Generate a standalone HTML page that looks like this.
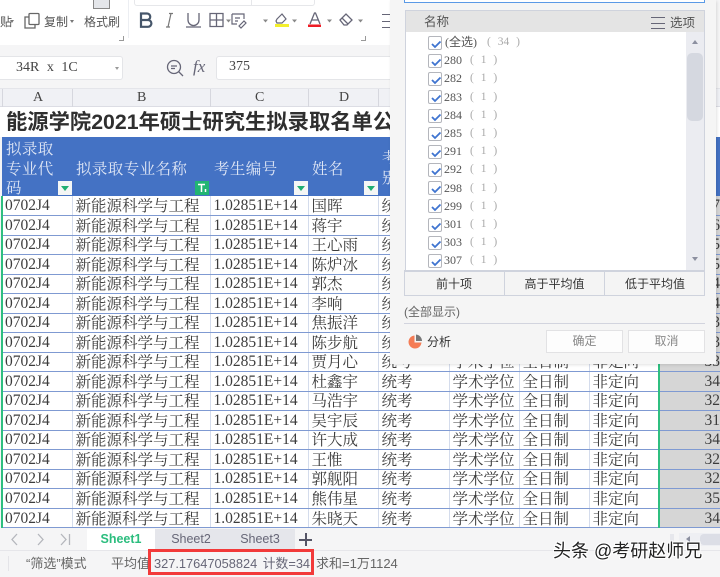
<!DOCTYPE html>
<html lang="zh"><head><meta charset="utf-8">
<style>
html,body{margin:0;padding:0;width:720px;height:577px;overflow:hidden;background:#f5f5f6}
*{box-sizing:border-box}
body{position:relative;font-family:"Liberation Sans","Noto Sans CJK SC",sans-serif;color:#444;filter:blur(.3px)}
.a{position:absolute;white-space:nowrap}
table{position:absolute;left:2px;top:196px;border-collapse:collapse;table-layout:fixed;width:718px;background:#fff}
td{height:19.53px;padding:0 0 0 3px;border-bottom:1px solid #7f9ad2;border-right:1px solid #d4dcec;font:15.5px/17px "Noto Serif CJK SC","Liberation Serif",serif;color:#3c3c3c;white-space:nowrap;overflow:hidden}
td.l{font:15.5px/17px "Liberation Serif",serif;padding-left:3px}
td.r{background:#d6d6d6;border-right:0;border-left:2px solid #2fbf80;text-align:right;font:15.5px/17px "Liberation Serif",serif;padding-right:0}
.h{top:158px;color:#dfe6f5;font:15.5px/20px "Noto Serif CJK SC",serif;letter-spacing:.4px}
.col{top:90px;font:14px/16px "Liberation Serif",serif;color:#444}
.fb{width:14px;height:14px;top:181px;background:#f4f6f5}
.fb:after{content:"";position:absolute;left:3px;top:5px;border:4px solid transparent;border-top:5px solid #1fae72;border-bottom:0}
.ck{position:absolute;left:428px;width:14px;height:14px;background:#fff;border:1px solid #b4b6bc;border-radius:2px}
.ck svg{position:absolute;left:1px;top:1px}
.it{left:444px;font:12px/16px "Liberation Serif",serif;color:#555}
.ct{font:11.5px/16px "Liberation Serif",serif;color:#aaa;white-space:pre;word-spacing:4px}
.btn{background:#fdfdfd;border:1px solid #e2e2e4;text-align:center;font-size:12px;line-height:21px;color:#888;height:23px;width:77px;top:330px}
.tb{color:#555;font-size:12px;line-height:16px}
</style></head><body>

<!-- ribbon -->
<div class="a" style="left:0;top:0;width:390px;height:45px;background:#fff"></div>
<div class="a" style="left:128px;top:0;width:1px;height:38px;background:#eceef2"></div>
<div class="a tb" style="left:0;top:14px">贴</div>
<div class="a" style="left:10px;top:20px;border:2.5px solid transparent;border-top:3px solid #777"></div>
<svg class="a" style="left:23px;top:12px" width="20" height="18" viewBox="0 0 20 18" fill="none" stroke="#666" stroke-width="1.3"><rect x="6" y="1.5" width="10" height="11" rx="1"/><path d="M6 5H2v11h10v-3.500"/></svg>
<div class="a tb" style="left:44px;top:14px">复制</div>
<div class="a" style="left:70px;top:20px;border:2.5px solid transparent;border-top:3px solid #777"></div>
<div class="a tb" style="left:84px;top:14px">格式刷</div>
<div class="a" style="left:93px;top:0;width:17px;height:9px;background:#e4e6ea;border:1px solid #888;border-top:0"></div>
<div class="a" style="left:134px;top:0;width:181px;height:6px;border:1px solid #e6e7ea;border-top:0;border-radius:0 0 3px 3px"></div>
<div class="a" style="left:251px;top:0;width:1px;height:6px;background:#e6e7ea"></div>
<div class="a" style="left:119px;top:36px;width:5px;height:5px;border-right:1px solid #999;border-bottom:1px solid #999"></div>
<div class="a" style="left:361px;top:36px;width:5px;height:5px;border-right:1px solid #999;border-bottom:1px solid #999"></div>
<svg class="a" style="left:138px;top:10px" width="232" height="20" viewBox="0 0 232 20" fill="none">
<path d="M3 3.500h6a3 3 0 0 1 0 6.500H3zM3 10h7a3.300 3.300 0 0 1 0 6.800H3z" stroke="#46566a" stroke-width="2.200"/>
<path d="M29 3.500h4M31 3.500l-3 13.500M26 17h4" stroke="#777" stroke-width="1.200" transform="translate(2 0)"/>
<path d="M50 3v7a5.500 5.500 0 0 0 11 0V3M48 17h15" stroke="#667" stroke-width="1.300"/>
<path d="M72 3.500h13v13H72zM78.500 3.500v13M72 10h13" stroke="#667" stroke-width="1.300"/>
<path d="M104 4h12v5M104 4v10h5M107 8h5M107 11h3M111 16l5-5 2 2-5 5z" stroke="#667" stroke-width="1.200" transform="translate(-10 0)"/>
<path d="M139 9l5-5 4 5-4 4h-5l-1-2z" stroke="#667" stroke-width="1.200"/>
<rect x="137" y="14" width="14" height="3" fill="#f3ef2c"/>
<path d="M172 14l4.500-11h1l4.500 11M174 10h6" stroke="#667" stroke-width="1.300"/>
<rect x="170" y="14.500" width="13" height="2.500" fill="#ee1c25"/>
<path d="M202 10l6-6 6 6-5 5h-3zM204 8l6 6" stroke="#667" stroke-width="1.300"/>
<path d="M88 9.500h5l-2.500 3zM125 9.500h5l-2.500 3zM154 9.500h5l-2.500 3zM189 9.500h5l-2.500 3zM220 9.500h5l-2.500 3z" fill="#888"/>
</svg>
<div class="a" style="left:382px;top:14px;width:8px;height:14px;border-top:1.300px solid #667;border-bottom:1.300px solid #667"></div>
<div class="a" style="left:382px;top:20.500px;width:8px;height:1.300px;background:#667"></div>

<!-- formula bar -->
<div class="a" style="left:0;top:56px;width:123px;height:24px;background:#fff;border:1px solid #e4e5e8;border-left:0;border-radius:0 3px 3px 0"></div>
<div class="a" style="left:16px;top:60px;font:14px/16px 'Liberation Serif',serif;color:#444;word-spacing:4px">34R x 1C</div>
<div class="a" style="left:115px;top:67px;border:2.500px solid transparent;border-top:3px solid #999"></div>
<svg class="a" style="left:166px;top:59px" width="18" height="18" viewBox="0 0 18 18" fill="none" stroke="#667" stroke-width="1.300"><circle cx="8" cy="8" r="6.500"/><path d="M12.500 12.500L17 17M5 7h6M5 9.500h4"/></svg>
<div class="a" style="left:193px;top:57px;font:italic 17px/20px 'Liberation Serif',serif;color:#667">fx</div>
<div class="a" style="left:216px;top:56px;width:180px;height:24px;background:#fff;border:1px solid #e4e5e8;border-radius:3px"></div>
<div class="a" style="left:229px;top:59px;font:14px/16px 'Liberation Serif',serif;color:#444">375</div>

<!-- column headers -->
<div class="a" style="left:0;top:88px;width:720px;height:19px;background:#f0f1f5;border-top:1px solid #e4e5ea;border-bottom:1px solid #dcdde4"></div>
<div class="a col" style="left:33px">A</div><div class="a col" style="left:137px">B</div><div class="a col" style="left:255px">C</div><div class="a col" style="left:339px">D</div>
<div class="a" style="left:2px;top:89px;width:1px;height:18px;background:#d6d7de"></div>
<div class="a" style="left:72px;top:89px;width:1px;height:18px;background:#d6d7de"></div>
<div class="a" style="left:210px;top:89px;width:1px;height:18px;background:#d6d7de"></div>
<div class="a" style="left:308px;top:89px;width:1px;height:18px;background:#d6d7de"></div>
<div class="a" style="left:378px;top:89px;width:1px;height:18px;background:#d6d7de"></div>

<!-- title -->
<div class="a" style="left:0;top:107px;width:720px;height:30px;background:#fff"></div>
<div class="a" style="left:6px;top:109px;font:bold 21.300px/27px 'Liberation Sans','Noto Sans CJK SC',sans-serif;color:#2f2f2f">能源学院2021年硕士研究生拟录取名单公示</div>

<!-- header -->
<div class="a" style="left:2px;top:137px;width:718px;height:59px;background:#4472c4"></div>
<div class="a h" style="left:6px;top:139px;line-height:19.500px;white-space:normal;width:60px">拟录取<br>专业代<br>码</div>
<div class="a h" style="left:76px">拟录取专业名称</div>
<div class="a h" style="left:214px">考生编号</div>
<div class="a h" style="left:312px">姓名</div>
<div class="a h" style="left:382px;top:147px;line-height:20px">考<br>别</div>
<div class="a fb" style="left:58px"></div>
<div class="a" style="left:195px;top:181px;width:14px;height:14px;background:#22b573"><svg width="14" height="14" viewBox="0 0 14 14" fill="none" stroke="#fff" stroke-width="1.500"><path d="M3 3.500h7M6.500 3.500V11M10.500 8v3"/></svg></div>
<div class="a fb" style="left:294px"></div>
<div class="a fb" style="left:364px"></div>

<!-- data -->
<table>
<colgroup><col style="width:70px"><col style="width:138px"><col style="width:98px"><col style="width:70px"><col style="width:71px"><col style="width:70px"><col style="width:70px"><col style="width:70px"><col style="width:61px"></colgroup>
<tr><td class="l">0702J4</td><td>新能源科学与工程</td><td class="l">1.02851E+14</td><td>国晖</td><td>统考</td><td>学术学位</td><td>全日制</td><td>非定向</td><td class="r">37</td></tr>
<tr><td class="l">0702J4</td><td>新能源科学与工程</td><td class="l">1.02851E+14</td><td>蒋宇</td><td>统考</td><td>学术学位</td><td>全日制</td><td>非定向</td><td class="r">36</td></tr>
<tr><td class="l">0702J4</td><td>新能源科学与工程</td><td class="l">1.02851E+14</td><td>王心雨</td><td>统考</td><td>学术学位</td><td>全日制</td><td>非定向</td><td class="r">35</td></tr>
<tr><td class="l">0702J4</td><td>新能源科学与工程</td><td class="l">1.02851E+14</td><td>陈炉冰</td><td>统考</td><td>学术学位</td><td>全日制</td><td>非定向</td><td class="r">35</td></tr>
<tr><td class="l">0702J4</td><td>新能源科学与工程</td><td class="l">1.02851E+14</td><td>郭杰</td><td>统考</td><td>学术学位</td><td>全日制</td><td>非定向</td><td class="r">34</td></tr>
<tr><td class="l">0702J4</td><td>新能源科学与工程</td><td class="l">1.02851E+14</td><td>李响</td><td>统考</td><td>学术学位</td><td>全日制</td><td>非定向</td><td class="r">34</td></tr>
<tr><td class="l">0702J4</td><td>新能源科学与工程</td><td class="l">1.02851E+14</td><td>焦振洋</td><td>统考</td><td>学术学位</td><td>全日制</td><td>非定向</td><td class="r">33</td></tr>
<tr><td class="l">0702J4</td><td>新能源科学与工程</td><td class="l">1.02851E+14</td><td>陈步航</td><td>统考</td><td>学术学位</td><td>全日制</td><td>非定向</td><td class="r">33</td></tr>
<tr><td class="l">0702J4</td><td>新能源科学与工程</td><td class="l">1.02851E+14</td><td>贾月心</td><td>统考</td><td>学术学位</td><td>全日制</td><td>非定向</td><td class="r">33</td></tr>
<tr><td class="l">0702J4</td><td>新能源科学与工程</td><td class="l">1.02851E+14</td><td>杜鑫宇</td><td>统考</td><td>学术学位</td><td>全日制</td><td>非定向</td><td class="r">34</td></tr>
<tr><td class="l">0702J4</td><td>新能源科学与工程</td><td class="l">1.02851E+14</td><td>马浩宇</td><td>统考</td><td>学术学位</td><td>全日制</td><td>非定向</td><td class="r">32</td></tr>
<tr><td class="l">0702J4</td><td>新能源科学与工程</td><td class="l">1.02851E+14</td><td>吴宇辰</td><td>统考</td><td>学术学位</td><td>全日制</td><td>非定向</td><td class="r">31</td></tr>
<tr><td class="l">0702J4</td><td>新能源科学与工程</td><td class="l">1.02851E+14</td><td>许大成</td><td>统考</td><td>学术学位</td><td>全日制</td><td>非定向</td><td class="r">34</td></tr>
<tr><td class="l">0702J4</td><td>新能源科学与工程</td><td class="l">1.02851E+14</td><td>王惟</td><td>统考</td><td>学术学位</td><td>全日制</td><td>非定向</td><td class="r">32</td></tr>
<tr><td class="l">0702J4</td><td>新能源科学与工程</td><td class="l">1.02851E+14</td><td>郭舰阳</td><td>统考</td><td>学术学位</td><td>全日制</td><td>非定向</td><td class="r">32</td></tr>
<tr><td class="l">0702J4</td><td>新能源科学与工程</td><td class="l">1.02851E+14</td><td>熊伟星</td><td>统考</td><td>学术学位</td><td>全日制</td><td>非定向</td><td class="r">35</td></tr>
<tr><td class="l">0702J4</td><td>新能源科学与工程</td><td class="l">1.02851E+14</td><td>朱晓天</td><td>统考</td><td>学术学位</td><td>全日制</td><td>非定向</td><td class="r">34</td></tr>
</table>
<div class="a" style="left:1px;top:196px;width:1.500px;height:332px;background:#2fbf80"></div>

<!-- panel -->
<div class="a" style="left:390px;top:0;width:326px;height:364px;background:#f5f5f5;box-shadow:1px 1px 3px rgba(0,0,0,.12)"></div>
<div class="a" style="left:404px;top:0;width:301px;height:3px;background:#fff;border:1px solid #5b9ae6;border-top:0"></div>
<div class="a" style="left:405px;top:10px;width:300px;height:261px;background:#fff;border:1px solid #cfd3dd"></div>
<div class="a" style="left:406px;top:11px;width:298px;height:21px;background:#e4e4e4"></div>
<div class="a" style="left:424px;top:14px;font-size:12.500px;line-height:17px;color:#555">名称</div>
<div class="a" style="left:651px;top:17px;width:14px;height:12px;border-top:1.300px solid #667;border-bottom:1.300px solid #667"></div>
<div class="a" style="left:651px;top:22.500px;width:14px;height:1.300px;background:#667"></div>
<div class="a" style="left:670px;top:15px;font-size:12.500px;line-height:17px;color:#555">选项</div>
<div class="a" style="left:686px;top:32px;width:18px;height:238px;background:#ebecf1"></div>
<div class="a" style="left:687px;top:53px;width:16px;height:68px;background:#d5d8e0;border-radius:5px"></div>
<div class="a" style="left:692px;top:40px;border:3.500px solid transparent;border-bottom:4px solid #8c90a0;border-top:0"></div>
<div class="a" style="left:692px;top:257px;border:3.500px solid transparent;border-top:4px solid #8c90a0;border-bottom:0"></div>

<svg width="0" height="0" style="position:absolute"><defs><path id="c" d="M2 6l3 3 5.500-5.500" fill="none" stroke="#3f74d0" stroke-width="1.800"/></defs></svg>
<div class="ck" style="top:36px"><svg width="12" height="12"><use href="#c"/></svg></div>
<div class="a it" style="left:445px;top:34px">(全选)</div><div class="a ct" style="left:487px;top:34px">( 34 )</div>
<div class="ck" style="top:54px"><svg width="12" height="12"><use href="#c"/></svg></div><div class="a it" style="top:52px">280</div><div class="a ct" style="left:470px;top:52px">( 1 )</div>
<div class="ck" style="top:72px"><svg width="12" height="12"><use href="#c"/></svg></div><div class="a it" style="top:70px">282</div><div class="a ct" style="left:470px;top:70px">( 1 )</div>
<div class="ck" style="top:90px"><svg width="12" height="12"><use href="#c"/></svg></div><div class="a it" style="top:89px">283</div><div class="a ct" style="left:470px;top:89px">( 1 )</div>
<div class="ck" style="top:109px"><svg width="12" height="12"><use href="#c"/></svg></div><div class="a it" style="top:107px">284</div><div class="a ct" style="left:470px;top:107px">( 1 )</div>
<div class="ck" style="top:127px"><svg width="12" height="12"><use href="#c"/></svg></div><div class="a it" style="top:125px">285</div><div class="a ct" style="left:470px;top:125px">( 1 )</div>
<div class="ck" style="top:145px"><svg width="12" height="12"><use href="#c"/></svg></div><div class="a it" style="top:143px">291</div><div class="a ct" style="left:470px;top:143px">( 1 )</div>
<div class="ck" style="top:163px"><svg width="12" height="12"><use href="#c"/></svg></div><div class="a it" style="top:161px">292</div><div class="a ct" style="left:470px;top:161px">( 1 )</div>
<div class="ck" style="top:181px"><svg width="12" height="12"><use href="#c"/></svg></div><div class="a it" style="top:180px">298</div><div class="a ct" style="left:470px;top:180px">( 1 )</div>
<div class="ck" style="top:199px"><svg width="12" height="12"><use href="#c"/></svg></div><div class="a it" style="top:198px">299</div><div class="a ct" style="left:470px;top:198px">( 1 )</div>
<div class="ck" style="top:218px"><svg width="12" height="12"><use href="#c"/></svg></div><div class="a it" style="top:216px">301</div><div class="a ct" style="left:470px;top:216px">( 1 )</div>
<div class="ck" style="top:236px"><svg width="12" height="12"><use href="#c"/></svg></div><div class="a it" style="top:234px">303</div><div class="a ct" style="left:470px;top:234px">( 1 )</div>
<div class="ck" style="top:254px"><svg width="12" height="12"><use href="#c"/></svg></div><div class="a it" style="top:252px">307</div><div class="a ct" style="left:470px;top:252px">( 1 )</div>

<div class="a" style="left:404px;top:270px;width:301px;height:26px;background:#f4f4f4;border:1px solid #cfd3dd;border-top:2px solid #cfd3dd"></div>
<div class="a" style="left:504px;top:271px;width:1px;height:24px;background:#cfd3dd"></div>
<div class="a" style="left:604px;top:271px;width:1px;height:24px;background:#cfd3dd"></div>
<div class="a" style="left:404px;top:276px;width:100px;text-align:center;font-size:12px;line-height:17px;color:#333">前十项</div>
<div class="a" style="left:505px;top:276px;width:99px;text-align:center;font-size:12px;line-height:17px;color:#333">高于平均值</div>
<div class="a" style="left:605px;top:276px;width:100px;text-align:center;font-size:12px;line-height:17px;color:#333">低于平均值</div>
<div class="a" style="left:404px;top:304px;font-size:12px;line-height:17px;color:#666">(全部显示)</div>
<div class="a" style="left:404px;top:323px;width:301px;height:1px;background:#d2d4de"></div>
<svg class="a" style="left:408px;top:334px" width="15" height="15" viewBox="0 0 15 15"><path d="M6.500 1.500A6.500 6.500 0 1 0 13.500 8.500H6.500z" fill="#f47c55"/><path d="M8 0.500A6.500 6.500 0 0 1 14 7H8z" fill="#777"/></svg>
<div class="a" style="left:427px;top:334px;font-size:12px;line-height:17px;color:#333">分析</div>
<div class="a btn" style="left:546px">确定</div>
<div class="a btn" style="left:628px">取消</div>

<!-- sheet tabs -->
<div class="a" style="left:0;top:529px;width:720px;height:22px;background:#f5f5f6;border-bottom:1px solid #e6e6ea"></div>
<svg class="a" style="left:8px;top:532px" width="66" height="15" viewBox="0 0 66 15" fill="none" stroke="#b4b6bc" stroke-width="1.300"><path d="M9 2L4 7.500 9 13M30 2l5 5.500L30 13M53 2l5 5.500L53 13M61.500 2v11"/></svg>
<div class="a" style="left:87px;top:529px;width:68px;height:21px;background:#fff;text-align:center;font:bold 12.500px/21px 'Liberation Sans',sans-serif;color:#2bbd7e">Sheet1</div>
<div class="a" style="left:155px;top:529px;width:140px;height:21px;background:#e5e6eb"></div>
<div class="a" style="left:156px;top:529px;width:70px;text-align:center;font:12.500px/21px 'Liberation Sans',sans-serif;color:#667">Sheet2</div>
<div class="a" style="left:225px;top:529px;width:70px;text-align:center;font:12.500px/21px 'Liberation Sans',sans-serif;color:#667">Sheet3</div>
<div class="a" style="left:299px;top:539px;width:13px;height:1.500px;background:#556"></div>
<div class="a" style="left:305px;top:533px;width:1.500px;height:13px;background:#556"></div>
<div class="a" style="left:670px;top:534px;width:4px;height:11px;background:#e6e7ec"></div>
<div class="a" style="left:679px;top:533px;width:41px;height:13px;background:#eeeff3"></div>
<div class="a" style="left:686px;top:536px;border:3.500px solid transparent;border-right:4px solid #8c90a0;border-left:0"></div>
<div class="a" style="left:700px;top:534px;width:20px;height:11px;background:#dcdee6;border-radius:4px 0 0 4px"></div>

<!-- status bar -->
<div class="a" style="left:8px;top:556px;width:1px;height:15px;background:#e4e4e8"></div>
<div class="a" style="left:26px;top:556px;font-size:13px;line-height:16px;color:#666">“筛选”模式</div>
<div class="a" style="left:111px;top:556px;font-size:13px;line-height:16px;color:#666">平均值</div>
<div class="a" style="left:148px;top:549px;width:166px;height:26px;border:3px solid #f23a3a"></div>
<div class="a" style="left:154px;top:556px;font-size:12.800px;line-height:16px;color:#667">327.17647058824&nbsp;<span style="margin-left:2px">计数=34</span></div>
<div class="a" style="left:316px;top:556px;font-size:13px;line-height:16px;color:#666">求和=1万1124</div>
<div class="a" style="left:553px;top:539px;font-size:18px;line-height:24px;color:#222;text-shadow:1px 1px 0 #fff,-1px -1px 0 #fff,1px -1px 0 #fff,-1px 1px 0 #fff">头条 @考研赵师兄</div>
</body></html>
